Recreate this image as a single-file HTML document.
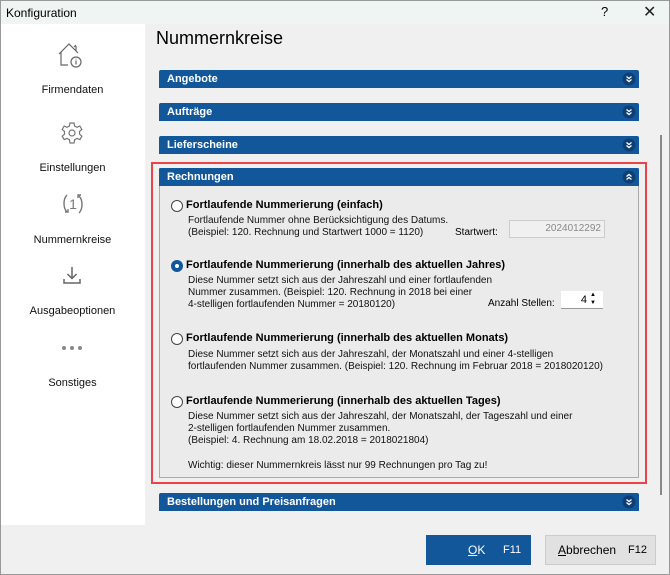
<!DOCTYPE html><html><head><style>
*{margin:0;padding:0;box-sizing:border-box}
body{width:670px;height:575px;overflow:hidden;background:#f0f0f0;font-family:"Liberation Sans",sans-serif;position:relative;color:#000}
.a{position:absolute}
.hdr{position:absolute;left:159px;width:480px;height:18px;background:#13579b;color:#fff;font-weight:bold;font-size:11px;line-height:19px;padding-left:8px;border-radius:2px 2px 0 0}
.chev{position:absolute;right:3px;top:2px;width:14px;height:14px}
.t{position:absolute;font-size:11px;font-weight:bold;left:186px;white-space:nowrap}
.d{position:absolute;font-size:10px;left:188px;line-height:12px;white-space:nowrap;color:#111}
.r{position:absolute;left:171px;width:12px;height:12px;border:1px solid #444;border-radius:50%;background:#fff}
.side{position:absolute;left:0;width:145px;text-align:center;font-size:11px;color:#111}
</style></head><body>
<svg width="0" height="0" style="position:absolute"><defs>
<g id="dn"><circle cx="7" cy="7" r="6.5" fill="#0d3f75"/><path d="M4.5 4.5L7 6.5L9.5 4.5M4.5 7.5L7 9.5L9.5 7.5" stroke="#fff" stroke-width="1.3" fill="none"/></g>
<g id="up"><circle cx="7" cy="7" r="6.5" fill="#0d3f75"/><path d="M4.5 6.5L7 4.5L9.5 6.5M4.5 9.5L7 7.5L9.5 9.5" stroke="#fff" stroke-width="1.3" fill="none"/></g>
</defs></svg>
<div class="a" style="left:0;top:0;width:670px;height:24px;background:#eef5f3"></div>
<div class="a" style="left:6px;top:6px;font-size:12px">Konfiguration</div>
<div class="a" style="left:601px;top:4px;font-size:13px">?</div>
<div class="a" style="left:643px;top:2px;font-size:16px;color:#222">✕</div>
<div class="a" style="left:0;top:24px;width:145px;height:501px;background:#fff"></div>
<svg class="a" style="left:57px;top:40px" width="30" height="30" viewBox="0 0 30 30" fill="none" stroke="#666" stroke-width="1.2"><path d="M2 14 L12 4 L21 13 M4 12 V25 H11 M19 11 V6 M17 7 L19 5"/><circle cx="19" cy="22" r="5"/><path d="M19 20.5v4M19 18.8v.6"/></svg>
<div class="side" style="top:84px">Firmendaten</div>
<svg class="a" style="left:60px;top:121px" width="24" height="24" viewBox="0 0 24 24" fill="none" stroke="#777" stroke-width="1.2"><path d="M10 2h4l.6 3 2.4 1.3 2.8-1.3 2 3.4-2.3 2 .1 2.8 2.3 2-2 3.4-2.8-1.2-2.4 1.3L14 22h-4l-.6-3.3-2.4-1.3-2.8 1.2-2-3.4 2.3-2V10.4l-2.3-2 2-3.4 2.8 1.3 2.4-1.3z"/><circle cx="12" cy="12" r="3"/></svg>
<div class="side" style="top:162px">Einstellungen</div>
<svg class="a" style="left:60px;top:192px" width="26" height="24" viewBox="0 0 26 24" fill="none" stroke="#777" stroke-width="1.4"><path d="M7 3C3 7 3 16 7 20M5 20h3v-3M19 21c4-4 4-13 0-17M21 3h-3v3"/><text x="13" y="17" font-size="14" fill="#777" stroke="none" text-anchor="middle" font-family="Liberation Sans">1</text></svg>
<div class="side" style="top:234px">Nummernkreise</div>
<svg class="a" style="left:63px;top:266px" width="18" height="20" viewBox="0 0 18 20" fill="none" stroke="#666" stroke-width="1.5"><path d="M9 1v11M4.5 8l4.5 4.5 4.5-4.5M1 13v4h16v-4"/></svg>
<div class="side" style="top:305px">Ausgabeoptionen</div>
<svg class="a" style="left:60px;top:345px" width="24" height="6"><circle cx="4" cy="3" r="2" fill="#888"/><circle cx="12" cy="3" r="2" fill="#888"/><circle cx="20" cy="3" r="2" fill="#888"/></svg>
<div class="side" style="top:377px">Sonstiges</div>
<div class="a" style="left:156px;top:28px;font-size:18px">Nummernkreise</div>
<div class="hdr" style="top:70px">Angebote<svg class="chev"><use href="#dn"/></svg></div>
<div class="hdr" style="top:103px">Aufträge<svg class="chev"><use href="#dn"/></svg></div>
<div class="hdr" style="top:136px">Lieferscheine<svg class="chev"><use href="#dn"/></svg></div>
<div class="a" style="left:151px;top:162px;width:496px;height:322px;border:2px solid #e8444a"></div>
<div class="a" style="left:159px;top:168px;width:480px;height:310px;background:#ebebeb;border:1px solid #aaa"></div>
<div class="hdr" style="top:168px">Rechnungen<svg class="chev"><use href="#up"/></svg></div>
<div class="r" style="top:200px"></div>
<div class="t" style="top:199px">Fortlaufende Nummerierung (einfach)</div>
<div class="d" style="top:215px">Fortlaufende Nummer ohne Berücksichtigung des Datums.<br>(Beispiel: 120. Rechnung und Startwert 1000 = 1120)</div>
<div class="a" style="left:455px;top:227px;font-size:10px">Startwert:</div>
<div class="a" style="left:509px;top:220px;width:96px;height:18px;background:#f0f0f0;border:1px solid #ccc;font-size:10px;color:#888;text-align:right;padding-right:3px;line-height:16px">2024012292</div>
<div class="r" style="top:260px;border:4px solid #13579b"></div>
<div class="t" style="top:259px">Fortlaufende Nummerierung (innerhalb des aktuellen Jahres)</div>
<div class="d" style="top:275px">Diese Nummer setzt sich aus der Jahreszahl und einer fortlaufenden<br>Nummer zusammen. (Beispiel: 120. Rechnung in 2018 bei einer<br>4-stelligen fortlaufenden Nummer = 20180120)</div>
<div class="a" style="left:488px;top:298px;font-size:10px">Anzahl Stellen:</div>
<div class="a" style="left:561px;top:291px;width:42px;height:18px;background:#fff;border-bottom:1px solid #999;font-size:11px;text-align:right;padding-right:16px;line-height:18px">4</div>
<div class="a" style="left:590px;top:291px;font-size:6px;line-height:8px">▲<br>▼</div>
<div class="r" style="top:333px"></div>
<div class="t" style="top:332px">Fortlaufende Nummerierung (innerhalb des aktuellen Monats)</div>
<div class="d" style="top:349px">Diese Nummer setzt sich aus der Jahreszahl, der Monatszahl und einer 4-stelligen<br>fortlaufenden Nummer zusammen. (Beispiel: 120. Rechnung im Februar 2018 = 2018020120)</div>
<div class="r" style="top:396px"></div>
<div class="t" style="top:395px">Fortlaufende Nummerierung (innerhalb des aktuellen Tages)</div>
<div class="d" style="top:411px">Diese Nummer setzt sich aus der Jahreszahl, der Monatszahl, der Tageszahl und einer<br>2-stelligen fortlaufenden Nummer zusammen.<br>(Beispiel: 4. Rechnung am 18.02.2018 = 2018021804)</div>
<div class="d" style="top:460px">Wichtig: dieser Nummernkreis lässt nur 99 Rechnungen pro Tag zu!</div>
<div class="hdr" style="top:493px">Bestellungen und Preisanfragen<svg class="chev"><use href="#dn"/></svg></div>
<div class="a" style="left:660px;top:135px;width:2px;height:360px;background:#888"></div>
<div class="a" style="left:0;top:525px;width:670px;height:50px;background:#f0f0f0"></div>
<div class="a" style="left:426px;top:535px;width:105px;height:30px;background:#13579b;color:#fff;font-size:12px;line-height:30px"><span style="position:absolute;left:42px"><u>O</u>K</span><span style="position:absolute;left:77px;font-size:11px">F11</span></div>
<div class="a" style="left:545px;top:535px;width:111px;height:30px;background:#e1e1e1;border:1px solid #ccc;font-size:12px;line-height:28px"><span style="position:absolute;left:12px"><u>A</u>bbrechen</span><span style="position:absolute;left:82px;font-size:11px">F12</span></div>
<div class="a" style="left:0;top:0;width:670px;height:575px;border:1px solid #999"></div>
</body></html>
